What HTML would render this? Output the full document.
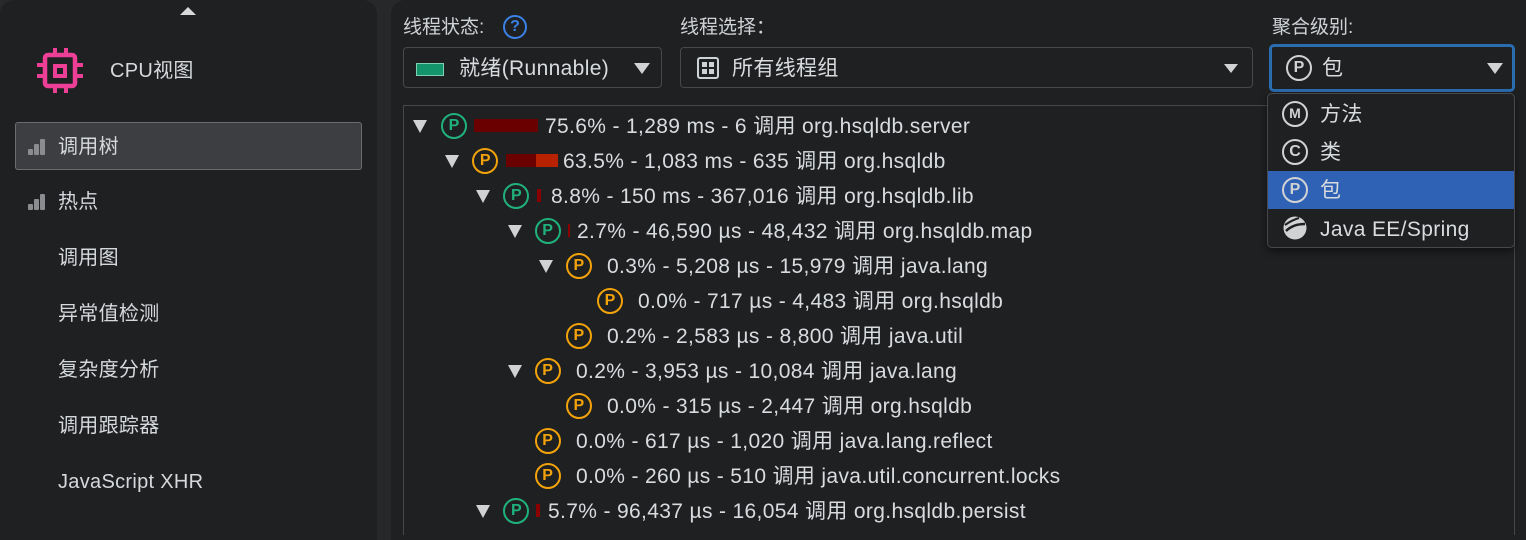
<!DOCTYPE html>
<html><head><meta charset="utf-8">
<style>
*{margin:0;padding:0;box-sizing:border-box}
body{width:1526px;height:525px;background:#26282a;overflow:hidden;position:relative;font-family:"Liberation Sans","Noto Sans CJK SC",sans-serif;color:#d9dcdf;font-size:20px}
.abs{position:absolute}
#left{left:0;top:0;width:377px;height:540px;background:#1f2022;border-radius:14px 14px 0 0}
#right{left:391px;top:0;width:1140px;height:540px;background:#1f2022;border-radius:14px 0 0 0}
.nav{position:absolute;left:58px;font-size:20px;line-height:28px;color:#d6d9dc;letter-spacing:0.3px}
.bars{position:absolute;left:28px;width:18px;height:16px}
.bars i{position:absolute;bottom:0;width:5px;background:#8a8c8f;border-radius:1px}
.lbl{position:absolute;font-size:19px;color:#cfd2d5;line-height:24px}
.sel{position:absolute;height:41px;border:1px solid #46484b;border-radius:4px;background:#1f2022}
.tri{position:absolute;width:0;height:0;border-left:7px solid transparent;border-right:7px solid transparent;border-top:13px solid #d0d2d4}
.row{position:absolute;height:35px;line-height:35px;white-space:nowrap;font-size:21px;letter-spacing:0.35px}
.ic{position:absolute;width:26px;height:26px;border-radius:50%;border:2.5px solid;font-size:16px;font-weight:bold;text-align:center;line-height:21px;font-family:"Liberation Sans",sans-serif;letter-spacing:0}
.g{border-color:#20b27c;color:#20b27c}.o{border-color:#f2a20a;color:#f2a20a}
.w{border-color:#d0d2d4;color:#d0d2d4}
</style></head><body>
<div id="left" class="abs"></div>
<div id="right" class="abs"></div>
<div class="abs" style="left:180px;top:7px;width:0;height:0;border-left:8px solid transparent;border-right:8px solid transparent;border-bottom:8px solid #d6d8da"></div>
<svg class="abs" style="left:36px;top:46px" width="50" height="50" viewBox="0 0 50 50">
<rect x="9" y="9" width="30" height="31" rx="3" fill="none" stroke="#ee3f97" stroke-width="4.5"/>
<rect x="19" y="20" width="10" height="10" fill="none" stroke="#ee3f97" stroke-width="4"/>
<g stroke="#ee3f97" stroke-width="4">
<line x1="19" y1="2" x2="19" y2="9"/><line x1="30" y1="2" x2="30" y2="9"/>
<line x1="19" y1="40" x2="19" y2="47"/><line x1="30" y1="40" x2="30" y2="47"/>
<line x1="1" y1="19" x2="9" y2="19"/><line x1="1" y1="30" x2="9" y2="30"/>
<line x1="39" y1="19" x2="47" y2="19"/><line x1="39" y1="30" x2="47" y2="30"/>
</g></svg>
<div class="nav" style="left:110px;top:57px">CPU视图</div>
<div class="abs" style="left:15px;top:122px;width:347px;height:48px;background:#3d3e41;border:1.5px solid #6a6c6f;border-radius:3px"></div>
<div class="bars" style="top:139px"><i style="left:0;height:6px"></i><i style="left:6px;height:11px"></i><i style="left:12px;height:16px"></i></div>
<div class="nav" style="top:133px">调用树</div>
<div class="bars" style="top:194px"><i style="left:0;height:6px"></i><i style="left:6px;height:11px"></i><i style="left:12px;height:16px"></i></div>
<div class="nav" style="top:188px">热点</div>
<div class="nav" style="top:244px">调用图</div>
<div class="nav" style="top:300px">异常值检测</div>
<div class="nav" style="top:356px">复杂度分析</div>
<div class="nav" style="top:412px">调用跟踪器</div>
<div class="nav" style="top:468px">JavaScript XHR</div>
<div class="lbl" style="left:403px;top:16px">线程状态:</div>
<div class="abs" style="left:503px;top:15px;width:24px;height:24px;border:2px solid #3b82e6;border-radius:50%;color:#3b82e6;font-size:16px;font-weight:bold;text-align:center;line-height:20px">?</div>
<div class="lbl" style="left:680px;top:16px">线程选择：</div>
<div class="lbl" style="left:1272px;top:16px">聚合级别:</div>
<div class="sel" style="left:403px;top:47px;width:259px"></div>
<div class="abs" style="left:416px;top:63px;width:28px;height:13px;background:#13946a;border:1px solid #7fd0b0"></div>
<div class="row" style="left:459px;top:51px">就绪(Runnable)</div>
<div class="tri" style="left:634px;top:63px;border-left-width:8px;border-right-width:8px;border-top-width:11px"></div>
<div class="sel" style="left:680px;top:47px;width:573px"></div>
<svg class="abs" style="left:697px;top:57px" width="22" height="22" viewBox="0 0 22 22"><rect x="1" y="1" width="20" height="20" rx="2" fill="none" stroke="#cfd2d5" stroke-width="2"/><g fill="#cfd2d5"><rect x="5" y="5" width="5" height="5"/><rect x="12" y="5" width="5" height="5"/><rect x="5" y="12" width="5" height="5"/><rect x="12" y="12" width="5" height="5"/></g></svg>
<div class="row" style="left:732px;top:51px">所有线程组</div>
<div class="tri" style="left:1224px;top:64px;border-top-width:9px"></div>
<div class="abs" style="left:1269px;top:44px;width:246px;height:48px;border:3px solid #2a6cb0;border-radius:5px;background:#1f2022"></div>
<div class="ic w" style="left:1286px;top:55px">P</div>
<div class="row" style="left:1322px;top:51px">包</div>
<div class="tri" style="left:1487px;top:63px;border-left-width:8px;border-right-width:8px;border-top-width:11px"></div>
<div class="abs" style="left:403px;top:105px;width:1112px;height:430px;border:1px solid #45474a;border-bottom:none"></div>
<div id="tree"></div>
<div class="abs" style="left:1267px;top:93px;width:248px;height:155px;background:#1f2022;border:1.5px solid #48494c;border-radius:5px;box-shadow:0 3px 8px rgba(0,0,0,.5)"></div>
<div class="abs" style="left:1268px;top:171px;width:246px;height:38px;background:#2f62b5"></div>
<div class="ic w" style="left:1282px;top:101px;font-size:14px">M</div>
<div class="row" style="left:1320px;top:97px">方法</div>
<div class="ic w" style="left:1282px;top:139px">C</div>
<div class="row" style="left:1320px;top:135px">类</div>
<div class="ic w" style="left:1282px;top:177px">P</div>
<div class="row" style="left:1320px;top:173px">包</div>
<svg class="abs" style="left:1283px;top:216px" width="24" height="24" viewBox="0 0 24 24"><circle cx="12" cy="12" r="11.5" fill="#d0d2d4"/><path d="M3 15 Q10 8 22 8" stroke="#1f2022" stroke-width="2.5" fill="none"/><path d="M2 9 Q9 4 16 2" stroke="#1f2022" stroke-width="2" fill="none"/></svg>
<div class="row" style="left:1320px;top:212px">Java EE/Spring</div>
<script>
var rows=[
[0,1,'g',[[474,64,'#6b0000']],545,'75.6% - 1,289 ms - 6 调用 org.hsqldb.server'],
[1,1,'o',[[506,30,'#6b0000'],[536,22,'#b82200']],563,'63.5% - 1,083 ms - 635 调用 org.hsqldb'],
[2,1,'g',[[537,4,'#8a0000']],551,'8.8% - 150 ms - 367,016 调用 org.hsqldb.lib'],
[3,1,'g',[[568,2,'#8a0000']],577,'2.7% - 46,590 µs - 48,432 调用 org.hsqldb.map'],
[4,1,'o',[],607,'0.3% - 5,208 µs - 15,979 调用 java.lang'],
[5,0,'o',[],638,'0.0% - 717 µs - 4,483 调用 org.hsqldb'],
[4,0,'o',[],607,'0.2% - 2,583 µs - 8,800 调用 java.util'],
[3,1,'o',[],576,'0.2% - 3,953 µs - 10,084 调用 java.lang'],
[4,0,'o',[],607,'0.0% - 315 µs - 2,447 调用 org.hsqldb'],
[3,0,'o',[],576,'0.0% - 617 µs - 1,020 调用 java.lang.reflect'],
[3,0,'o',[],576,'0.0% - 260 µs - 510 调用 java.util.concurrent.locks'],
[2,1,'g',[[536,4,'#8a0000']],548,'5.7% - 96,437 µs - 16,054 调用 org.hsqldb.persist']
];
var h='';
rows.forEach(function(r,i){
 var cy=126+i*35, lv=r[0];
 var tx=413+lv*31.5, ix=441+lv*31.2;
 if(r[1]) h+='<div class="tri" style="left:'+tx+'px;top:'+(cy-6)+'px"></div>';
 h+='<div class="ic '+r[2]+'" style="left:'+ix+'px;top:'+(cy-13)+'px">P</div>';
 r[3].forEach(function(b){h+='<div class="abs" style="left:'+b[0]+'px;top:'+(cy-7)+'px;width:'+b[1]+'px;height:13px;background:'+b[2]+'"></div>';});
 h+='<div class="row" style="left:'+r[4]+'px;top:'+(cy-17)+'px">'+r[5]+'</div>';
});
document.getElementById('tree').innerHTML=h;
</script>
</body></html>
